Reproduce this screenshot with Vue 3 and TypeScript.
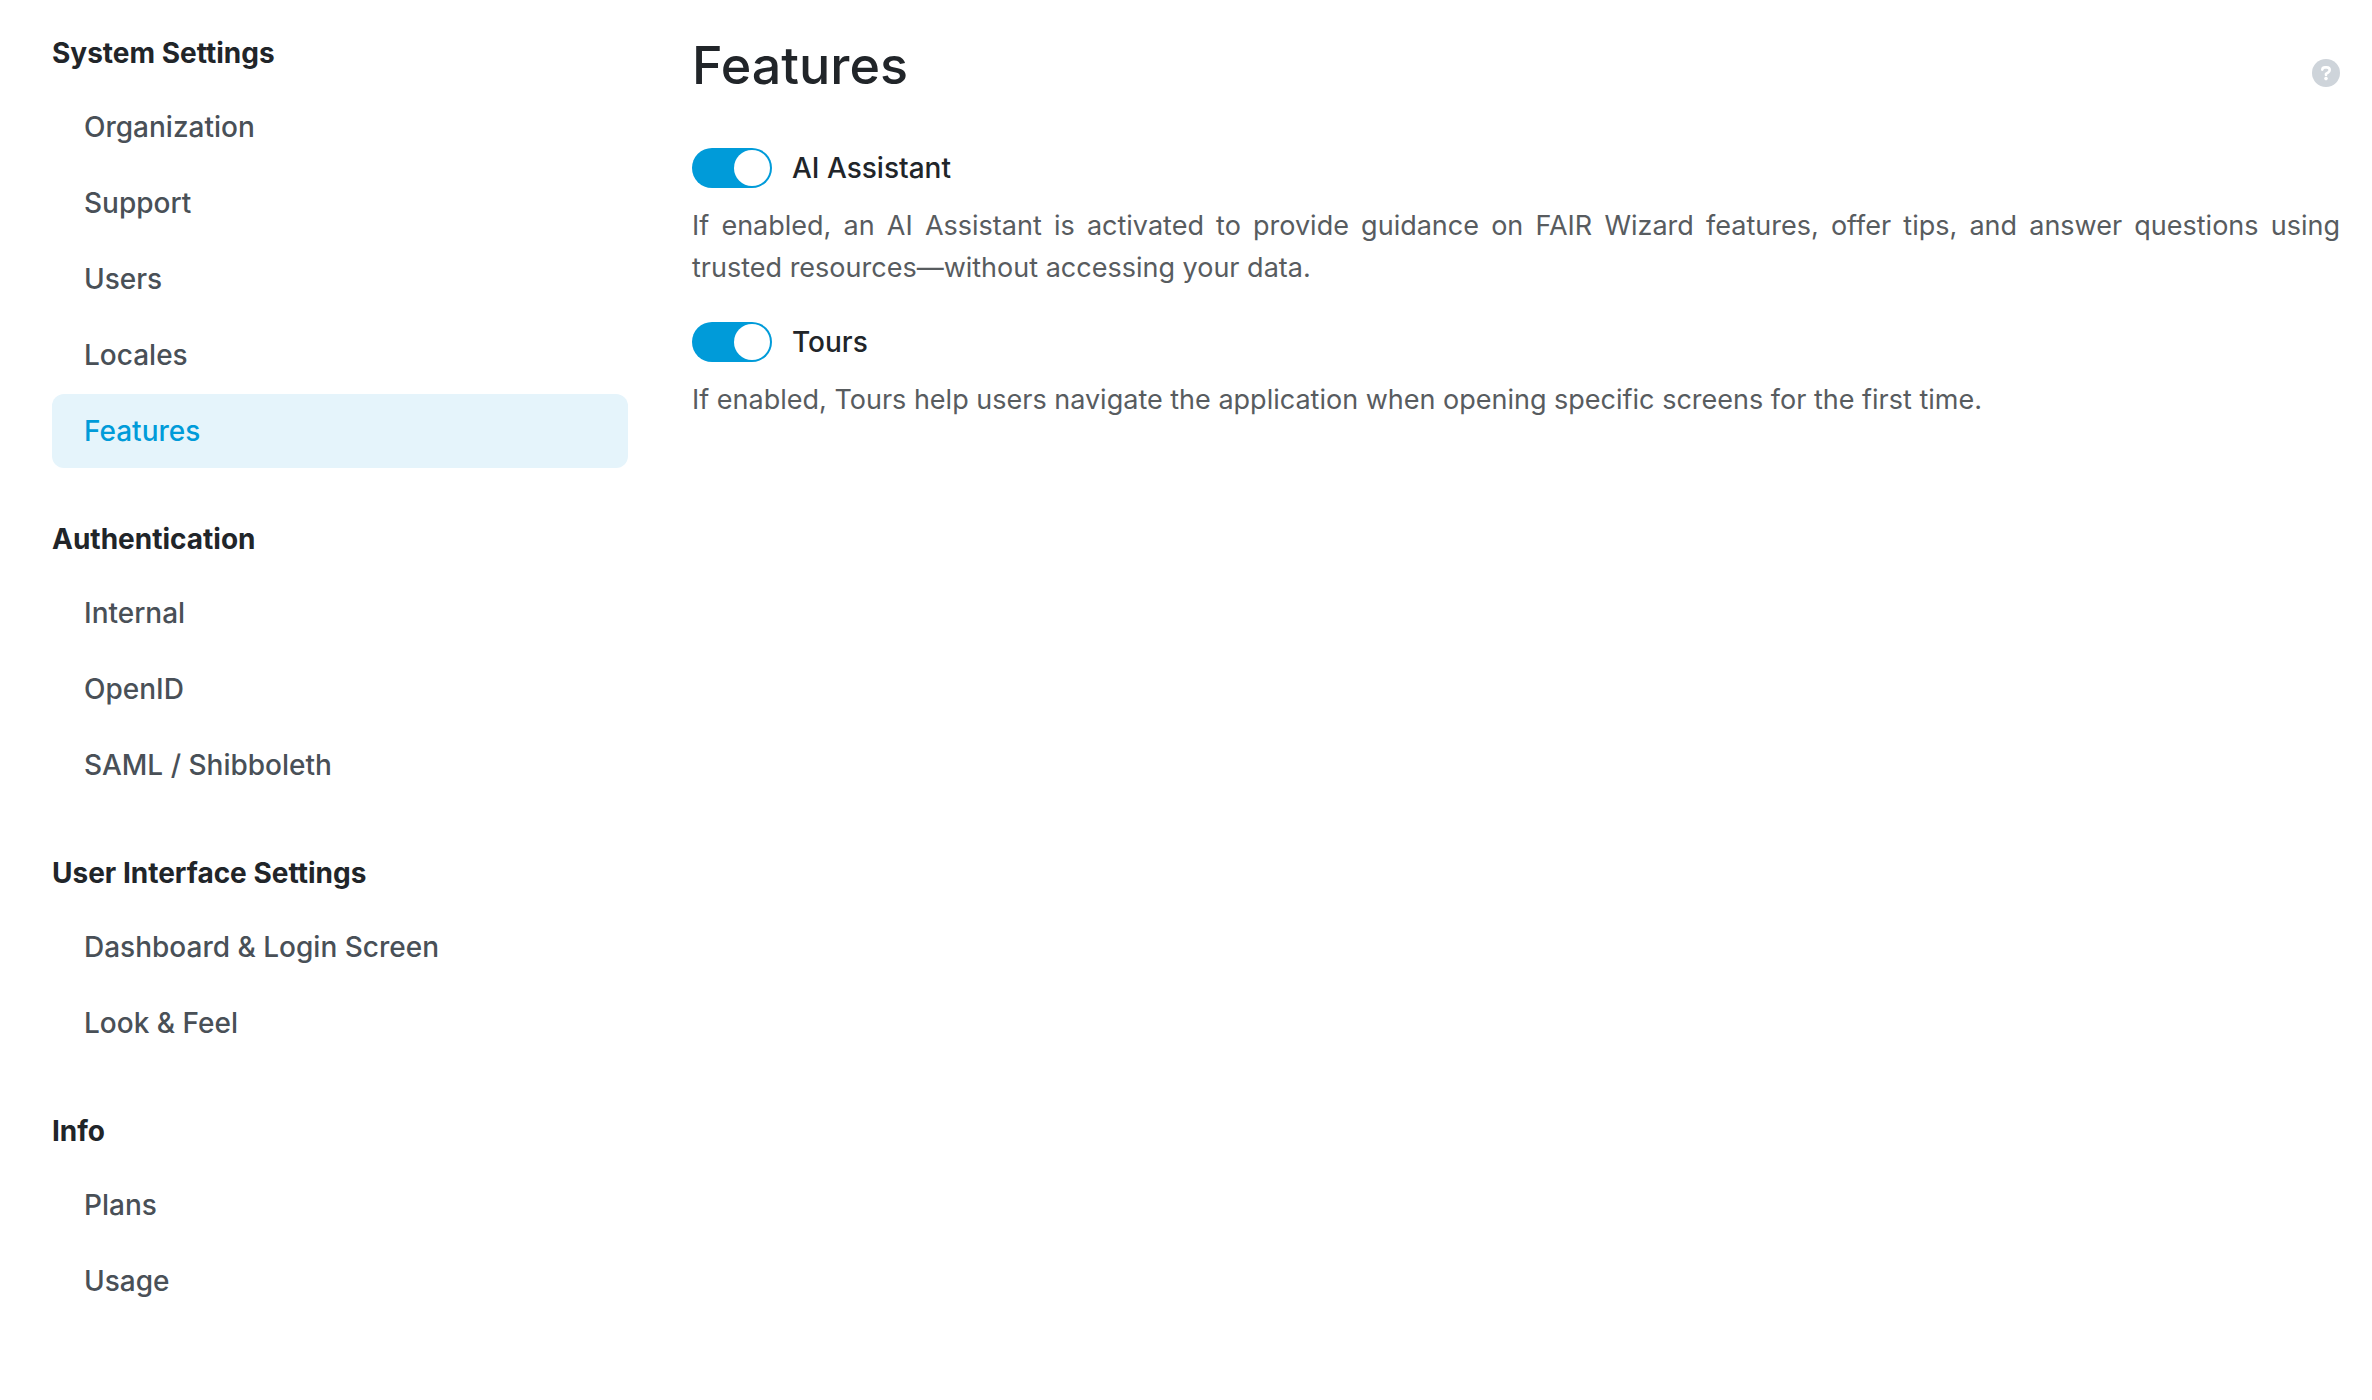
<script setup lang="ts">
import { ref } from 'vue'

interface NavGroup {
  title: string
  items: string[]
}

interface Feature {
  id: string
  label: string
  description: string
  enabled: boolean
}

const groups: NavGroup[] = [
  { title: 'System Settings', items: ['Organization', 'Support', 'Users', 'Locales', 'Features'] },
  { title: 'Authentication', items: ['Internal', 'OpenID', 'SAML / Shibboleth'] },
  { title: 'User Interface Settings', items: ['Dashboard & Login Screen', 'Look & Feel'] },
  { title: 'Info', items: ['Plans', 'Usage'] },
]

const active = ref('Features')

const features = ref<Feature[]>([
  {
    id: 'ai-assistant',
    label: 'AI Assistant',
    description:
      'If enabled, an AI Assistant is activated to provide guidance on FAIR Wizard features, offer tips, and answer questions using trusted resources—without accessing your data.',
    enabled: true,
  },
  {
    id: 'tours',
    label: 'Tours',
    description:
      'If enabled, Tours help users navigate the application when opening specific screens for the first time.',
    enabled: true,
  },
])
</script>

<template>
  <div class="settings">
    <nav class="sidebar">
      <section v-for="group in groups" :key="group.title" class="group">
        <h2 class="group-title">{{ group.title }}</h2>
        <a
          v-for="item in group.items"
          :key="item"
          href="#"
          class="nav-link"
          :class="{ active: item === active }"
          @click.prevent="active = item"
          >{{ item }}</a
        >
      </section>
    </nav>

    <main class="content">
      <header class="page-header">
        <h1>Features</h1>
        <a href="#" class="help" aria-label="Help">
          <svg viewBox="0 0 28 28" width="28" height="28" aria-hidden="true">
            <circle cx="14" cy="14" r="14" fill="#ced4da" />
            <path
              d="M10.3 10.6C10.5 9.1 11.6 8.4 13 8.4h1.6c1.8 0 3.1 1.1 3.1 2.7 0 1.2-.7 2-1.7 2.6l-2 1.2v1"
              fill="none"
              stroke="#fff"
              stroke-width="2.6"
              stroke-linecap="round"
              stroke-linejoin="round"
            />
            <circle cx="14" cy="19.6" r="1.8" fill="#fff" />
          </svg>
        </a>
      </header>

      <div v-for="feature in features" :key="feature.id" class="feature">
        <div class="toggle">
          <input
            :id="feature.id"
            v-model="feature.enabled"
            type="checkbox"
            role="switch"
            class="switch"
            :aria-describedby="feature.id + '-text'"
          />
          <label :for="feature.id">{{ feature.label }}</label>
        </div>
        <p :id="feature.id + '-text'" class="description">{{ feature.description }}</p>
      </div>
    </main>
  </div>
</template>

<style>
body {
  margin: 0;
  background: #fff;
}
</style>

<style scoped>
.settings {
  display: flex;
  align-items: flex-start;
  gap: 64px;
  padding: 32px 32px 32px 52px;
  color: #212529;
  font-family: Inter, 'Liberation Sans', sans-serif;
  font-size: 28px;
  line-height: 42px;
}

.sidebar {
  flex: 0 0 576px;
  display: flex;
  flex-direction: column;
  gap: 50px;
}

.group {
  display: flex;
  flex-direction: column;
  gap: 2px;
}

.group-title {
  margin: 0 0 14px;
  font-size: 28px;
  font-weight: 700;
  line-height: 42px;
}

.nav-link {
  padding: 16px 32px;
  border-radius: 12px;
  color: #495057;
  font-weight: 500;
  text-decoration: none;
}

.nav-link.active {
  background: #e5f4fb;
  color: #009bd9;
}

.content {
  flex: 1;
  min-width: 0;
  display: flex;
  flex-direction: column;
  gap: 32px;
}

.page-header {
  display: flex;
  align-items: center;
  justify-content: space-between;
  margin-bottom: 15px;
}

h1 {
  margin: 0;
  font-size: 52px;
  font-weight: 500;
  line-height: 68px;
}

.help {
  display: flex;
  padding-top: 14px;
}

.feature {
  display: flex;
  flex-direction: column;
  gap: 16px;
}

.toggle {
  display: flex;
  align-items: center;
  gap: 20px;
  font-weight: 500;
}

.switch {
  appearance: none;
  box-sizing: border-box;
  display: flex;
  width: 80px;
  height: 40px;
  margin: 0;
  padding: 2px;
  border-radius: 20px;
  background: #adb5bd;
  cursor: pointer;
}

.switch::before {
  content: '';
  width: 36px;
  height: 36px;
  border-radius: 50%;
  background: #fff;
}

.switch:checked {
  justify-content: flex-end;
  background: #009bd9;
}

.description {
  margin: 0;
  color: #585c5f;
  font-size: 27px;
  text-align: justify;
}
</style>
